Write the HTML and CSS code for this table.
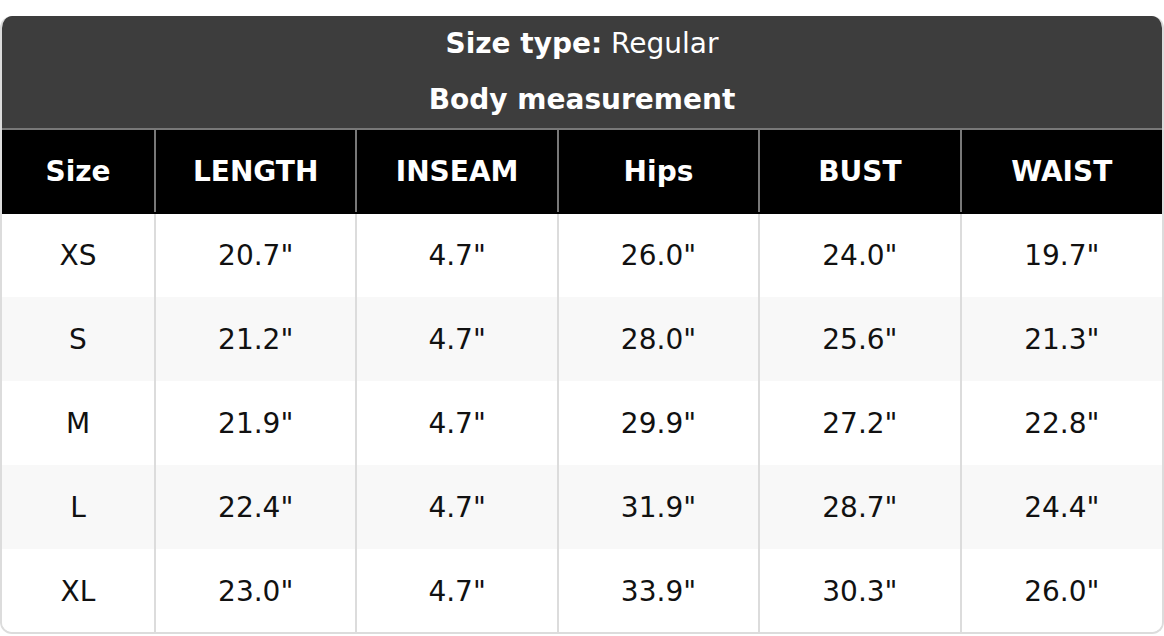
FILE: index.html
```html
<!DOCTYPE html>
<html>
<head>
<meta charset="utf-8">
<link rel="stylesheet" href="styles.css">
</head>
<body>
<div class="card">
  <div class="caption">
    <div class="cap-line"><b>Size type:</b> Regular</div>
    <div class="cap-line"><b>Body measurement</b></div>
  </div>
  <table class="chart">
    <colgroup>
      <col class="col-size">
      <col><col><col><col><col>
    </colgroup>
    <thead>
      <tr><th>Size</th><th>LENGTH</th><th>INSEAM</th><th>Hips</th><th>BUST</th><th>WAIST</th></tr>
    </thead>
    <tbody>
      <tr><td>XS</td><td>20.7"</td><td>4.7"</td><td>26.0"</td><td>24.0"</td><td>19.7"</td></tr>
      <tr class="alt"><td>S</td><td>21.2"</td><td>4.7"</td><td>28.0"</td><td>25.6"</td><td>21.3"</td></tr>
      <tr><td>M</td><td>21.9"</td><td>4.7"</td><td>29.9"</td><td>27.2"</td><td>22.8"</td></tr>
      <tr class="alt"><td>L</td><td>22.4"</td><td>4.7"</td><td>31.9"</td><td>28.7"</td><td>24.4"</td></tr>
      <tr><td>XL</td><td>23.0"</td><td>4.7"</td><td>33.9"</td><td>30.3"</td><td>26.0"</td></tr>
    </tbody>
  </table>
</div>
</body>
</html>
```

FILE: styles.css
```css
html, body {
  margin: 0;
  padding: 0;
  background: #fff;
}
body {
  padding-top: 16px;
  font-family: "DejaVu Sans", sans-serif;
  font-size: 28px;
  color: #111;
}
.card {
  width: 1164px;
  box-sizing: border-box;
  border: 2px solid #dcdcdc;
  border-top: 0;
  border-radius: 12px;
  overflow: hidden;
}
.caption {
  background: #3d3d3d;
  color: #fff;
  text-align: center;
}
.cap-line {
  height: 56px;
  line-height: 56px;
}
.cap-line b {
  font-weight: bold;
}
.chart {
  width: 100%;
  border-collapse: collapse;
  table-layout: fixed;
}
.col-size {
  width: 153px;
}
.chart th {
  background: #000;
  color: #fff;
  font-weight: bold;
  height: 82px;
  padding: 0;
  border: 2px solid #787878;
  border-bottom-color: #000;
  text-align: center;
  vertical-align: middle;
}
.chart td {
  height: 82px;
  padding: 0;
  border: 2px solid #dcdcdc;
  border-top-color: transparent;
  border-bottom-color: transparent;
  text-align: center;
  vertical-align: middle;
  background: #fff;
}
.chart tr.alt td {
  background: #f8f8f8;
}
.chart th:first-child,
.chart td:first-child {
  border-left: 0;
}
.chart th:last-child,
.chart td:last-child {
  border-right: 0;
}
.chart tbody tr:last-child td {
  border-bottom: 0;
}
```
